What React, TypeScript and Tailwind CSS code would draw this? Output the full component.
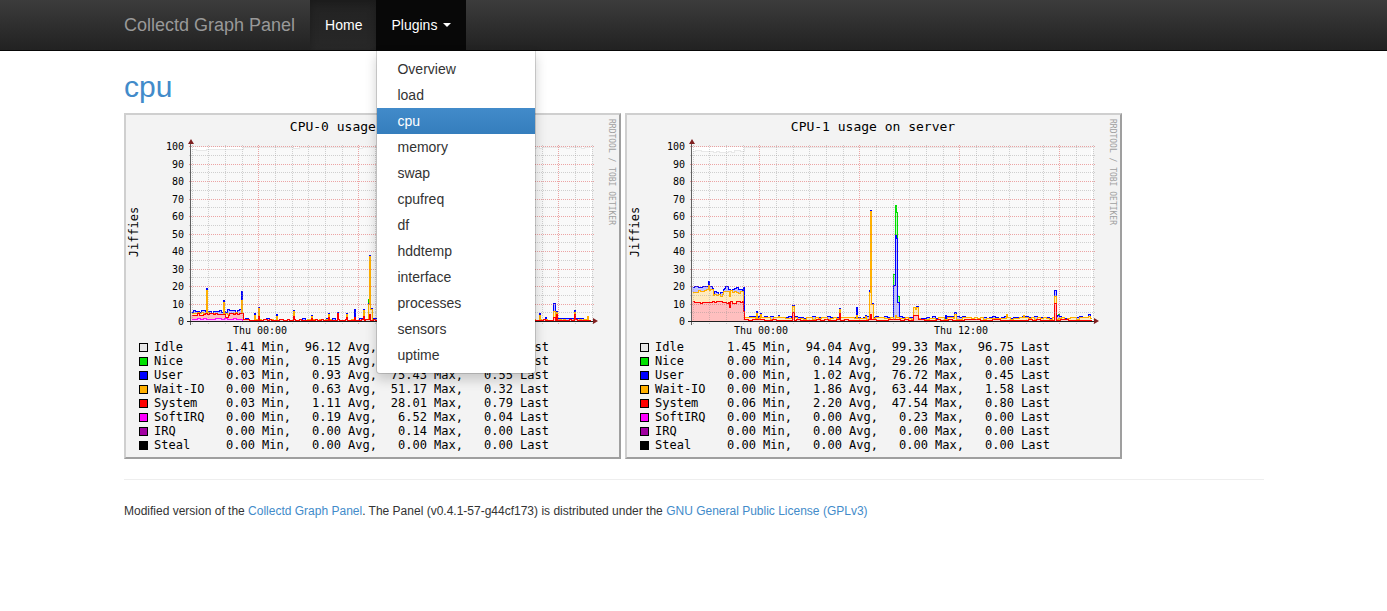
import { useState } from "react";

type Spike = [x: number, width: number, height: number];
type Series = { stroke: string; fill: string; heights: number[] };
type LegendRow = [name: string, swatch: string, stats: string[]];
type Graph = { title: string; idle: number[]; series: Series[]; legend: LegendRow[] };

const SPAN = 399;
const LEFT = 65;
const BASE = 206;

const noise = (i: number, seed: number) => {
  const v = Math.sin(i * 12.9898 + seed * 78.233) * 43758.5453;
  return v - Math.floor(v);
};

const build = (base: (x: number) => number, spikes: Spike[]) => {
  const out = Array.from({ length: SPAN }, (_, x) => Math.round(base(x)));
  for (const [x, width, height] of spikes) {
    for (let i = x; i < x + width && i < SPAN; i++) out[i] = height;
  }
  return out;
};

const step = (x: number, size: number, seed: number) => noise(Math.floor(x / size), seed);

const cpu0: Series[] = [
  {
    stroke: "#00e000",
    fill: "#bff7bf",
    heights: build(() => 0, [[177, 1, 22]]),
  },
  {
    stroke: "#0000ff",
    fill: "#bfbfff",
    heights: build(
      (x) => (x < 51 ? 8 + step(x, 2, 1) * 4 : x > 364 && x < 392 ? 3 : 1 + (step(x, 3, 2) > 0.8 ? 2 : 0)),
      [[15, 1, 33], [32, 1, 21], [50, 1, 30], [63, 1, 8], [67, 1, 14], [85, 1, 7], [102, 1, 11], [120, 1, 6], [137, 1, 8], [146, 1, 9], [155, 1, 8], [163, 1, 12], [172, 1, 12], [177, 1, 18], [178, 1, 66], [179, 2, 13], [348, 1, 8], [354, 1, 4], [362, 2, 18], [365, 1, 10], [383, 1, 11], [396, 1, 5]]
    ),
  },
  {
    stroke: "#ffb000",
    fill: "#ffebbf",
    heights: build(
      (x) => (x < 51 ? 7 + step(x, 2, 3) * 2 : 1 + (step(x, 2, 4) > 0.75 ? 1 : 0)),
      [[15, 1, 31], [32, 1, 19], [50, 1, 21], [63, 1, 6], [67, 1, 13], [85, 1, 5], [102, 1, 10], [120, 1, 5], [137, 1, 7], [146, 1, 7], [155, 1, 7], [172, 1, 11], [177, 1, 17], [178, 1, 65], [179, 2, 12], [348, 1, 6], [362, 2, 10], [365, 1, 9], [383, 1, 9], [396, 1, 5]]
    ),
  },
  {
    stroke: "#ff0000",
    fill: "#ffbfbf",
    heights: build(
      (x) => (x < 52 ? 6 + step(x, 2, 5) * 2 : 1 + (step(x, 2, 6) > 0.8 ? 1 : 0)),
      [[34, 3, 4], [67, 1, 5], [102, 1, 5], [120, 1, 3], [137, 1, 4], [146, 1, 8], [155, 1, 4], [163, 1, 4], [172, 1, 5], [178, 1, 7], [362, 2, 4], [365, 1, 7], [383, 1, 7]]
    ),
  },
  {
    stroke: "#ff00ff",
    fill: "#ffbfff",
    heights: build((x) => (x < 51 ? 2 + (step(x, 3, 7) > 0.75 ? 1 : 0) : 0), []),
  },
];

const cpu1: Series[] = [
  {
    stroke: "#00e000",
    fill: "#bff7bf",
    heights: build(() => 0, [[201, 2, 47], [203, 1, 116], [204, 1, 109], [205, 2, 25], [366, 1, 7]]),
  },
  {
    stroke: "#0000ff",
    fill: "#bfbfff",
    heights: build(
      (x) => (x < 21 ? 33 + step(x, 2, 1) * 3 : x < 31 ? 26 + step(x, 2, 2) * 4 : x < 51 ? 31 + step(x, 2, 3) * 4 : 3 + step(x, 3, 4) * 1.9),
      [[16, 1, 40], [33, 3, 35], [51, 1, 34], [64, 1, 10], [68, 1, 8], [86, 1, 6], [100, 2, 16], [147, 1, 13], [164, 1, 14], [173, 1, 6], [177, 1, 31], [178, 1, 111], [179, 2, 18], [201, 2, 36], [203, 1, 86], [204, 1, 83], [205, 2, 19], [221, 3, 14], [224, 2, 15], [253, 1, 6], [262, 2, 9], [314, 1, 7], [362, 2, 31], [365, 2, 6], [396, 2, 7]]
    ),
  },
  {
    stroke: "#ffb000",
    fill: "#ffebbf",
    heights: build(
      (x) => (x < 21 ? 29 + step(x, 2, 5) * 3 : x < 31 ? 24 + step(x, 2, 6) * 3 : x < 51 ? 28 + step(x, 2, 7) * 3 : 2 + step(x, 3, 8) * 2.4),
      [[16, 1, 36], [37, 1, 25], [64, 1, 8], [68, 1, 7], [86, 1, 5], [100, 2, 15], [147, 1, 12], [164, 1, 6], [173, 1, 5], [177, 1, 29], [178, 1, 110], [179, 2, 17], [203, 1, 6], [221, 2, 14], [223, 1, 12], [224, 2, 14], [262, 2, 7], [314, 1, 7], [331, 1, 6], [362, 2, 25], [396, 2, 5]]
    ),
  },
  {
    stroke: "#ff0000",
    fill: "#ffbfbf",
    heights: build(
      (x) => (x < 51 ? 18 + step(x, 2, 9) * 2.5 : 1 + (step(x, 4, 10) > 0.7 ? 1 : 0)),
      [[37, 1, 14], [51, 1, 10], [100, 2, 9], [147, 1, 8], [178, 1, 7], [221, 5, 6], [362, 2, 18]]
    ),
  },
];

const colors: [string, string][] = [
  ["Idle", "bg-[#e8e8e8]"],
  ["Nice", "bg-[#00e000]"],
  ["User", "bg-[#0000ff]"],
  ["Wait-IO", "bg-[#ffb000]"],
  ["System", "bg-[#ff0000]"],
  ["SoftIRQ", "bg-[#ff00ff]"],
  ["IRQ", "bg-[#a000a0]"],
  ["Steal", "bg-[#000000]"],
];

const legend = (rows: string[]): LegendRow[] =>
  rows.map((row, i) => [colors[i][0], colors[i][1], row.split(" ")]);

const graphs: Graph[] = [
  {
    title: "CPU-0 usage on server",
    idle: build((x) => (x < 52 ? 171 + step(x, 5, 11) * 1.4 : 174 - (step(x, 3, 12) > 0.9 ? 1 : 0)), []),
    series: cpu0,
    legend: legend([
      "1.41 96.12 99.51 97.82",
      "0.00 0.15 10.21 0.00",
      "0.03 0.93 75.43 0.55",
      "0.00 0.63 51.17 0.32",
      "0.03 1.11 28.01 0.79",
      "0.00 0.19 6.52 0.04",
      "0.00 0.00 0.14 0.00",
      "0.00 0.00 0.00 0.00",
    ]),
  },
  {
    title: "CPU-1 usage on server",
    idle: build((x) => (x < 52 ? 169 + step(x, 3, 13) * 2.4 : 174), []),
    series: cpu1,
    legend: legend([
      "1.45 94.04 99.33 96.75",
      "0.00 0.14 29.26 0.00",
      "0.00 1.02 76.72 0.45",
      "0.00 1.86 63.44 1.58",
      "0.06 2.20 47.54 0.80",
      "0.00 0.00 0.23 0.00",
      "0.00 0.00 0.00 0.00",
      "0.00 0.00 0.00 0.00",
    ]),
  },
];

const linePath = (heights: number[]) => {
  let d = "";
  let open = false;
  heights.forEach((h, i) => {
    const x = LEFT + i + 0.5;
    const y = BASE + 0.5 - h;
    if (h === 0) {
      if (open) d += `V${BASE + 0.5}`;
      open = false;
      return;
    }
    d += open ? `V${y}H${x + 1}` : `M${x} ${i === 0 ? y : BASE + 0.5}V${y}H${x + 1}`;
    open = true;
  });
  return d;
};

const areaPath = (heights: number[]) =>
  `M${LEFT} ${BASE}` + heights.map((h, i) => `V${BASE - h}H${LEFT + i + 1}`).join("") + `V${BASE}Z`;

function Plot({ graph }: { graph: Graph }) {
  const rows = Array.from({ length: 21 }, (_, i) => i * 5);
  const columns = Array.from({ length: 25 }, (_, i) => i);
  const font = "font-['DejaVu_Sans_Mono',monospace]";
  return (
    <svg viewBox="0 0 493 225" className="block w-full" role="img" aria-label={graph.title}>
      <g shapeRendering="crispEdges">
        <rect x={LEFT} y="32" width="401" height="174" fill="#fff" />
        <path d={areaPath(graph.idle)} fill="#f9f9f9" />
        <path d={linePath(graph.idle)} fill="none" stroke="#e8e8e8" />
        {graph.series.map((s) => (
          <g key={s.stroke}>
            <path d={areaPath(s.heights)} fill={s.fill} />
            <path d={linePath(s.heights)} fill="none" stroke={s.stroke} />
          </g>
        ))}
        {rows.map((v) => (
          <path
            key={v}
            d={`M63 ${Math.round(BASE - v * 1.75) + 0.5}H468`}
            stroke={v % 10 === 0 ? "#e05050" : "#909090"}
            strokeOpacity={v % 10 === 0 ? 0.5 : 0.4}
            strokeDasharray="1 1"
          />
        ))}
        {columns.map((i) => {
          const x = Math.round(LEFT + 0.5 + (i * 50) / 3) + 0.5;
          const major = i % 6 === 4;
          return (
            <path
              key={i}
              d={`M${x} 30V209`}
              stroke={major ? "#e05050" : "#909090"}
              strokeOpacity={major ? 0.5 : 0.4}
              strokeDasharray="1 1"
            />
          );
        })}
        <path d="M64.5 28V210" stroke="#606060" />
        <path d="M61 206.5H468" stroke="#202020" />
      </g>
      <path d="M65 24L68 29H62ZM472 206L467 203V209Z" fill="#802020" />
      <g className={font} fontSize="10" textAnchor="end">
        {rows
          .filter((v) => v % 10 === 0)
          .map((v) => (
            <text key={v} x="58" y={Math.round(BASE - v * 1.75) + 4}>
              {v}
            </text>
          ))}
      </g>
      <g className={font} fontSize="10" textAnchor="middle">
        <text x="134" y="219">Thu 00:00</text>
        <text x="334" y="219">Thu 12:00</text>
      </g>
      <text className={font} fontSize="13" textAnchor="middle" x="246" y="16">
        {graph.title}
      </text>
      <text className={font} fontSize="12" textAnchor="middle" transform="translate(12 117) rotate(-90)">
        Jiffies
      </text>
      <text className={font} fontSize="8" fill="#a0a0a0" transform="translate(483 4) rotate(90)">
        RRDTOOL / TOBI OETIKER
      </text>
    </svg>
  );
}

const units = ["Min,", "Avg,", "Max,", "Last"];

function GraphCard({ graph }: { graph: Graph }) {
  return (
    <figure className="w-[497px] max-w-full overflow-hidden border-2 border-t-[#cfcfcf] border-l-[#cfcfcf] border-r-[#9f9f9f] border-b-[#9f9f9f] bg-[#f3f3f3] pb-[5px] text-black">
      <Plot graph={graph} />
      <table
        aria-label={`${graph.title} summary`}
        className="w-[423px] table-fixed border-collapse font-['DejaVu_Sans_Mono',monospace] text-[12px] leading-[14px] whitespace-pre"
      >
        <colgroup>
          <col className="w-[28px]" />
          <col className="w-[51px]" />
          <col span={4} className="w-[86px]" />
        </colgroup>
        <tbody>
          {graph.legend.map(([name, swatch, stats]) => (
            <tr key={name} className="h-[14px]">
              <td className="p-0 pl-[13px]">
                <span className={`block size-[9px] border border-black ${swatch}`} />
              </td>
              <th scope="row" className="p-0 text-left font-normal">{name}</th>
              {stats.map((value, i) => (
                <td key={units[i]} className="p-0 text-right">
                  {value} {units[i]}
                </td>
              ))}
            </tr>
          ))}
        </tbody>
      </table>
    </figure>
  );
}

const plugins = ["Overview", "load", "cpu", "memory", "swap", "cpufreq", "df", "hddtemp", "interface", "processes", "sensors", "uptime"];

function Navbar() {
  const [open, setOpen] = useState(true);
  return (
    <nav className="border-b border-[#080808] bg-linear-to-b from-[#3c3c3c] to-[#222222]">
      <div className="mx-auto flex max-w-[1171px] pr-[15px] pl-4">
        <a href="#home" className="py-[15px] pr-[15px] text-[18px] leading-5 text-[#999999]">
          Collectd Graph Panel
        </a>
        <ul className="flex leading-5 text-white">
          <li>
            <a
              href="#home"
              className="block bg-linear-to-b from-[#222222] to-[#282828] py-[15px] pr-[14px] pl-[15px] shadow-[inset_0_3px_9px_rgba(0,0,0,0.25)]"
            >
              Home
            </a>
          </li>
          <li className="relative">
            <button
              type="button"
              aria-expanded={open}
              onClick={() => setOpen(!open)}
              className="flex items-center bg-[#080808] p-[15px]"
            >
              Plugins
              <span className="ml-[6px] border-x-4 border-t-4 border-x-transparent border-t-white" />
            </button>
            {open && (
              <ul className="absolute top-full left-0 z-10 w-40 rounded-b-[4px] border border-black/15 bg-white bg-clip-padding py-[5px] text-[#333333] shadow-[0_6px_12px_rgba(0,0,0,0.175)]">
                {plugins.map((name) => (
                  <li key={name}>
                    <a
                      href={`#${name}`}
                      className={
                        name === "cpu"
                          ? "block bg-linear-to-b from-[#428bca] to-[#357ebd] px-5 py-[3px] text-white"
                          : "block px-5 py-[3px] hover:bg-[#f5f5f5]"
                      }
                    >
                      {name}
                    </a>
                  </li>
                ))}
              </ul>
            )}
          </li>
        </ul>
      </div>
    </nav>
  );
}

export default function App() {
  return (
    <div className="min-h-screen bg-white font-['Liberation_Sans',Arial,sans-serif] text-[14px] text-[#333333]">
      <Navbar />
      <main className="mx-auto max-w-[1171px] pr-[15px] pl-4">
        <h2 className="pt-[19px] pb-[10px] text-[30px] leading-[33px]">
          <a href="#cpu" className="text-[#428bca]">cpu</a>
        </h2>
        <div className="flex flex-wrap gap-1">
          {graphs.map((graph) => (
            <GraphCard key={graph.title} graph={graph} />
          ))}
        </div>
        <hr className="my-5 border-t border-[#eeeeee]" />
        <footer className="text-[12px] leading-[22px]">
          Modified version of the <a href="#cgp" className="text-[#428bca]">Collectd Graph Panel</a>. The Panel
          (v0.4.1-57-g44cf173) is distributed under the{" "}
          <a href="#license" className="text-[#428bca]">GNU General Public License (GPLv3)</a>
        </footer>
      </main>
    </div>
  );
}
